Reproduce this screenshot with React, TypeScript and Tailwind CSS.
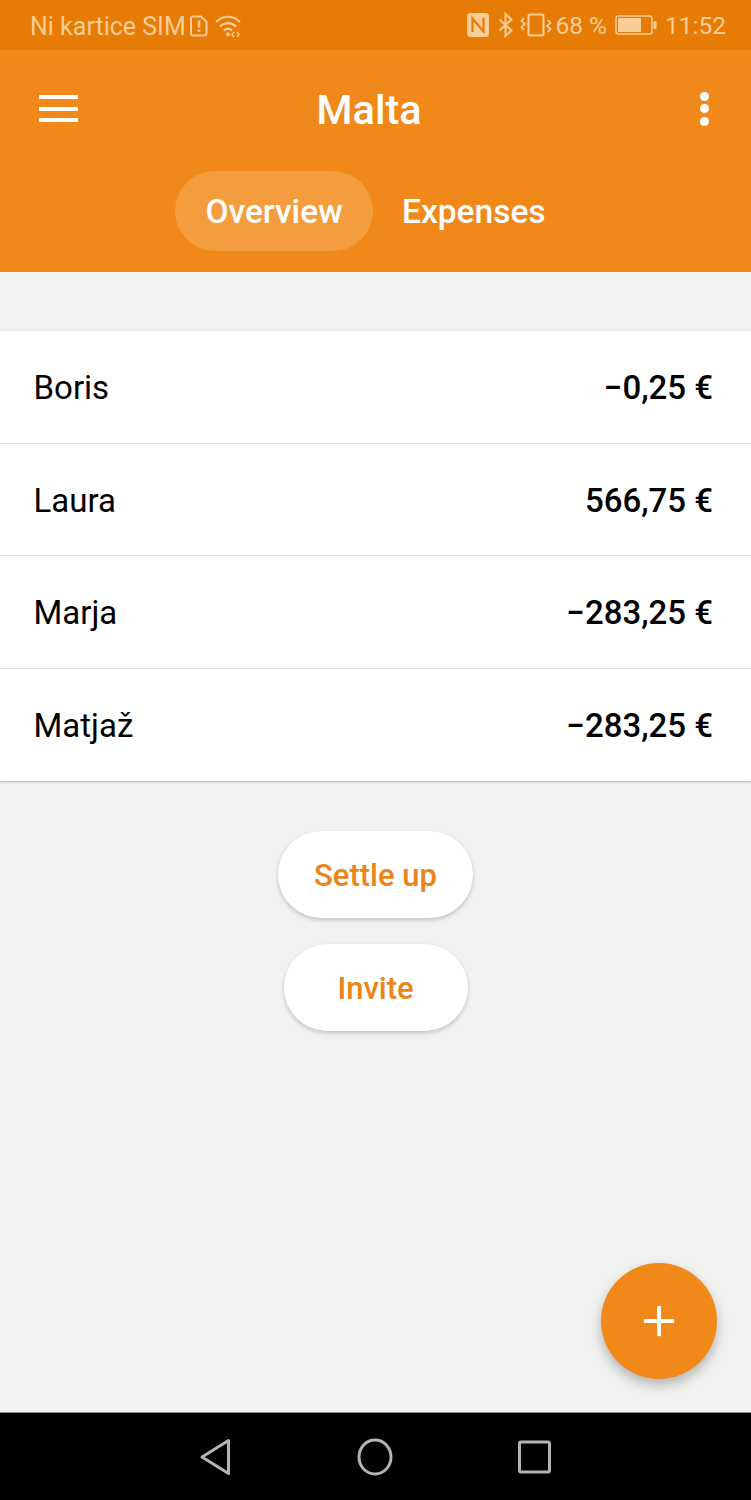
import { Plus } from 'lucide-react'

const BALANCES = [
  { name: 'Boris', amount: '−0,25 €' },
  { name: 'Laura', amount: '566,75 €' },
  { name: 'Marja', amount: '−283,25 €' },
  { name: 'Matjaž', amount: '−283,25 €' },
]

function StatusBar() {
  return (
    <div className="h-[50px] bg-[#e67c05] flex items-center justify-between pl-[30px] pr-[25px] pt-[3px] text-[#f9cd97] text-[25px]">
      <div className="flex items-center">
        <span>Ni kartice SIM</span>
        <svg width="18" height="24" viewBox="0 0 18 22" fill="none" stroke="currentColor" strokeWidth="2" className="ml-[4px] -mt-[2px]">
          <path d="M3 1.500h8l5.500 5.500v11.500a2 2 0 0 1-2 2H3a2 2 0 0 1-2-2v-15a2 2 0 0 1 2-2z" />
          <path d="M9 5.500v7M9 14.500v2.500" strokeWidth="2.600" />
        </svg>
        <svg width="28" height="24" viewBox="0 0 28 24" fill="none" stroke="currentColor" strokeWidth="2.200" className="ml-[7px] -mt-[2px]">
          <path d="M1 8c7-7 17-7 24 0" />
          <path d="M5 12.500c4.500-4.500 11.500-4.500 16 0" />
          <path d="M9 16.500c2.500-2.500 5.500-2.500 8 0" />
          <circle cx="13" cy="20.500" r="2" fill="currentColor" stroke="none" />
          <path d="M19 18l-2 2.500 2 2.500M22 18l2 2.500-2 2.500" strokeWidth="1.500" />
        </svg>
      </div>
      <div className="flex items-center">
        <svg width="24" height="26" viewBox="0 0 24 26" className="mr-[8px] -mt-[3px]">
          <rect x="1" y="1" width="22" height="24" rx="3.500" fill="currentColor" />
          <path d="M6.500 20V6.500l11 13V6" fill="none" stroke="#e67c05" strokeWidth="2.200" />
        </svg>
        <svg width="16" height="26" viewBox="0 0 16 24" fill="none" stroke="currentColor" strokeWidth="2" className="mr-[6px] -mt-[3px]">
          <path d="M1.500 6.500l12 11-6 5.500V1l6 5.500-12 11" />
        </svg>
        <svg width="32" height="26" viewBox="0 0 32 24" fill="none" stroke="currentColor" strokeWidth="2" className="mr-[3px] -mt-[3px]">
          <rect x="8.500" y="1.500" width="15" height="21" rx="1.500" />
          <path d="M4 5l-2.500 3L5 11l-3.500 3L4 17M28 7l2.500 3L27 13l3.500 3L28 19" strokeWidth="1.800" />
        </svg>
        <span className="text-[24.500px]">68 %</span>
        <svg width="42" height="22" viewBox="0 0 42 22" className="ml-[8px] -mt-[3px]">
          <rect x="1" y="2" width="36" height="18" rx="2.500" fill="none" stroke="currentColor" strokeWidth="1.500" />
          <rect x="3" y="4" width="23" height="14" rx="1" fill="currentColor" />
          <rect x="38.500" y="7" width="3" height="8" rx="1" fill="currentColor" />
        </svg>
        <span className="ml-[8px] text-[24.500px]">11:52</span>
      </div>
    </div>
  )
}

function Header() {
  return (
    <header className="relative h-[222px] bg-[#f0881a] text-white">
      <div className="h-[117px] flex items-center justify-between pl-[39px] pr-[41px]">
        <div className="w-[39px] flex flex-col gap-[7.500px]">
          <div className="h-[4px] bg-white" />
          <div className="h-[4px] bg-white" />
          <div className="h-[4px] bg-white" />
        </div>
        <h1 className="font-medium text-[41.500px] leading-none translate-y-[1px] -translate-x-[19px]">Malta</h1>
        <div className="w-[12px] flex flex-col items-center gap-[3.500px]">
          <div className="w-[9px] h-[9px] rounded-full bg-white" />
          <div className="w-[9px] h-[9px] rounded-full bg-white" />
          <div className="w-[9px] h-[9px] rounded-full bg-white" />
        </div>
      </div>
      <div className="mt-[4px] flex justify-center items-center font-medium text-[33.500px] -translate-x-[15px]">
        <div className="h-[80px] px-[30px] pt-[2px] flex items-center rounded-full bg-[#f49d3e]">Overview</div>
        <div className="h-[80px] pl-[29px] pt-[2px] flex items-center">Expenses</div>
      </div>
    </header>
  )
}

function BalanceList() {
  return (
    <div className="mt-[58px] bg-white border-t border-[#e2e2e2] shadow-[0_1px_2px_rgba(0,0,0,0.25)]">
      {BALANCES.map((b, i) => (
        <div
          key={b.name}
          className={`h-[112.500px] flex items-center justify-between pl-[33.500px] pr-[38px] pt-[2px] text-[33px] text-black ${i < 3 ? 'border-b border-[#e4e4e4]' : ''}`}
        >
          <span>{b.name}</span>
          <span className="font-medium">{b.amount}</span>
        </div>
      ))}
    </div>
  )
}

function PillButton({ label, width }: { label: string; width: string }) {
  return (
    <button className={`${width} h-[87px] pt-[3px] rounded-full bg-white text-[#e9851a] font-medium text-[31px] shadow-[0_2px_4px_rgba(0,0,0,0.2)]`}>
      {label}
    </button>
  )
}

function NavBar() {
  return (
    <div className="h-[88px] bg-black border-t border-[#8a8a8a] flex items-center justify-center">
      <svg width="400" height="40" viewBox="0 0 400 40" fill="none" stroke="#b3b3b3" strokeWidth="3" strokeLinejoin="round" className="translate-x-[-1px]">
        <path d="M53.500 3.500v33L27 20z" />
        <ellipse cx="200" cy="20" rx="16" ry="17" />
        <rect x="344.500" y="5" width="30" height="30" rx="1.500" />
      </svg>
    </div>
  )
}

export default function App() {
  return (
    <div className="relative w-[751px] h-[1500px] flex flex-col bg-[#f1f1ef] overflow-hidden font-['Roboto',sans-serif]">
      <StatusBar />
      <Header />
      <BalanceList />
      <div className="flex flex-col items-center gap-[26px] mt-[50px]">
        <PillButton label="Settle up" width="w-[195px]" />
        <PillButton label="Invite" width="w-[184px]" />
      </div>
      <div className="flex-1" />
      <NavBar />
      <button className="absolute left-[601px] top-[1263px] w-[116px] h-[116px] rounded-full bg-[#f0881a] flex items-center justify-center shadow-[0_6px_12px_rgba(0,0,0,0.25)]">
        <Plus className="w-[52px] h-[52px] text-white" strokeWidth={1.8} strokeLinecap="butt" />
      </button>
    </div>
  )
}
